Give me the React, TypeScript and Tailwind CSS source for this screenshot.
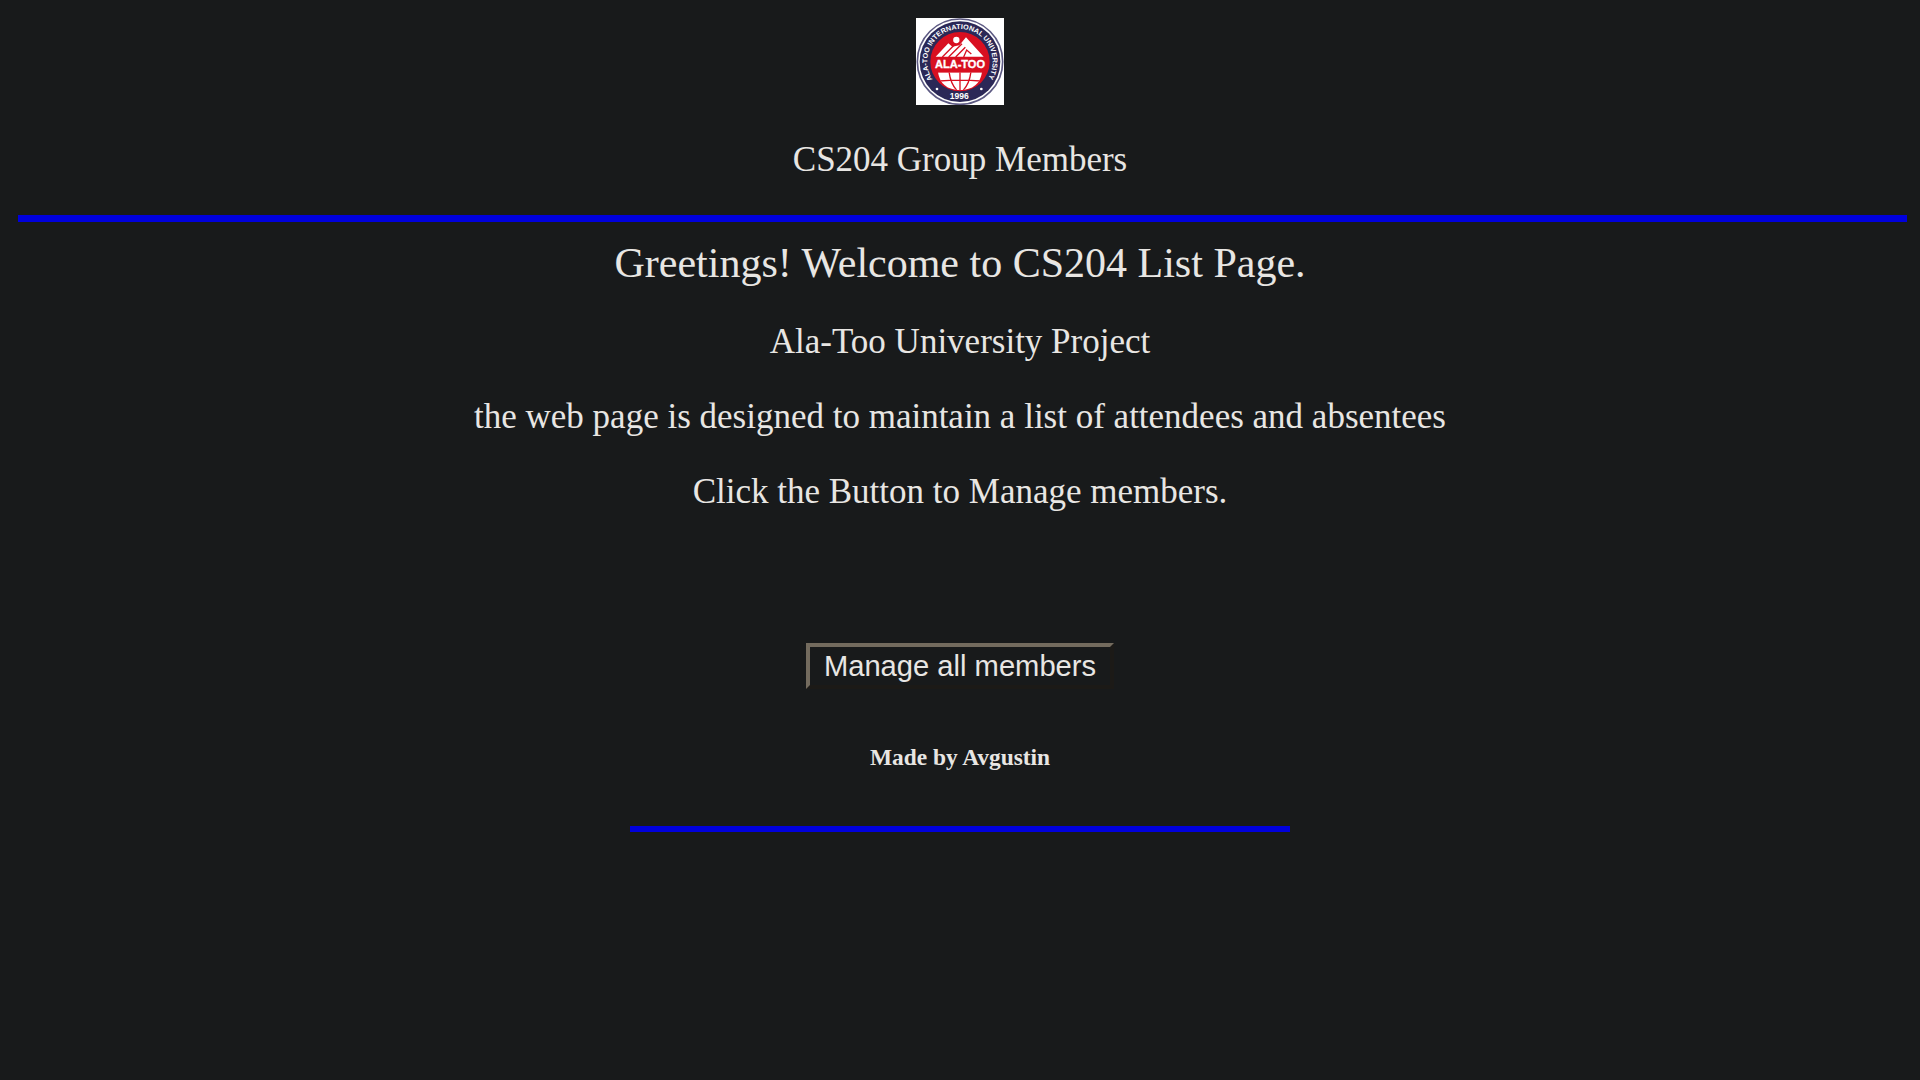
function Logo() {
  return (
    <svg
      viewBox="0 0 264 261"
      preserveAspectRatio="none"
      className="mt-[18px] block h-[87px] w-[88px] bg-white font-['Liberation_Sans',Arial,sans-serif] font-bold"
    >
      <defs>
        <path id="ring" d="M51 186 A 98 98 0 1 1 213 186" />
        <clipPath id="globe">
          <path d="M66 163 H198 Q190 215 132 217 Q74 215 66 163Z" />
        </clipPath>
      </defs>
      <circle cx="132" cy="131" r="128" fill="#fff" stroke="#5c5982" strokeWidth="5" />
      <circle cx="132" cy="131" r="121" fill="#2b2857" />
      <circle cx="132" cy="131" r="89" fill="#d80f20" />
      <path d="M59 116 L97 76 L109 86 L130 82 L150 58 L203 116Z" fill="#fff" />
      <path
        d="M79 117 L114 82 M98 117 L138 77 M119 117 L148 88 M143 117 L152 96 L166 108"
        stroke="#d80f20"
        strokeWidth="4"
        fill="none"
      />
      <circle cx="121" cy="66" r="12" fill="#fff" stroke="#d80f20" strokeWidth="5" />
      <text x="132" y="150" textAnchor="middle" fontSize="32" textLength="150" lengthAdjust="spacingAndGlyphs" fill="#fff" stroke="#fff" strokeWidth="1">
        ALA-TOO
      </text>
      <g clipPath="url(#globe)">
        <rect x="60" y="163" width="144" height="60" fill="#fff" />
        <path
          d="M132 160V220 M99 160Q103 196 123 218 M165 160Q161 196 141 218 M70 189Q132 184 194 189"
          stroke="#d80f20"
          strokeWidth="4"
          fill="none"
        />
      </g>
      <text fontSize="21" fill="#fff">
        <textPath href="#ring" startOffset="2" textLength="416" lengthAdjust="spacingAndGlyphs">
          ALA-TOO INTERNATIONAL UNIVERSITY
        </textPath>
      </text>
      <text x="130" y="243" textAnchor="middle" fontSize="26" textLength="57" lengthAdjust="spacingAndGlyphs" fill="#fff">
        1996
      </text>
      <circle cx="63" cy="213" r="4" fill="#fff" />
      <circle cx="196" cy="213" r="4" fill="#fff" />
    </svg>
  );
}

export default function App() {
  return (
    <main className="flex h-[1080px] w-full flex-col items-center overflow-hidden bg-[#181a1b] font-['Liberation_Serif','Times_New_Roman',serif] text-[35px] leading-[40px] text-[#e8e6e3]">
      <Logo />
      <p className="mt-[35px]">CS204 Group Members</p>
      <hr className="mt-[35px] mr-[13px] ml-[18px] h-[7px] self-stretch border-0 bg-[#0000dd]" />
      <h1 className="mt-[17px] text-[42px] leading-[48px]">Greetings! Welcome to CS204 List Page.</h1>
      <p className="mt-[35px]">Ala-Too University Project</p>
      <p className="mt-[35px]">the web page is designed to maintain a list of attendees and absentees</p>
      <p className="mt-[35px]">Click the Button to Manage members.</p>
      <button className="mt-[131px] flex h-[46px] w-[308px] items-center justify-center border-4 border-t-[#736b5e] border-r-[#1c1a17] border-b-[#1c1a17] border-l-[#736b5e] font-['Liberation_Sans',Arial,sans-serif] text-[29.17px] leading-[34px] whitespace-nowrap">
        Manage all members
      </button>
      <h2 className="mt-[55px] text-[23.4px] leading-[26px] font-bold">Made by Avgustin</h2>
      <hr className="mt-[56px] h-[6px] w-[660px] border-0 bg-[#0000dd]" />
    </main>
  );
}
